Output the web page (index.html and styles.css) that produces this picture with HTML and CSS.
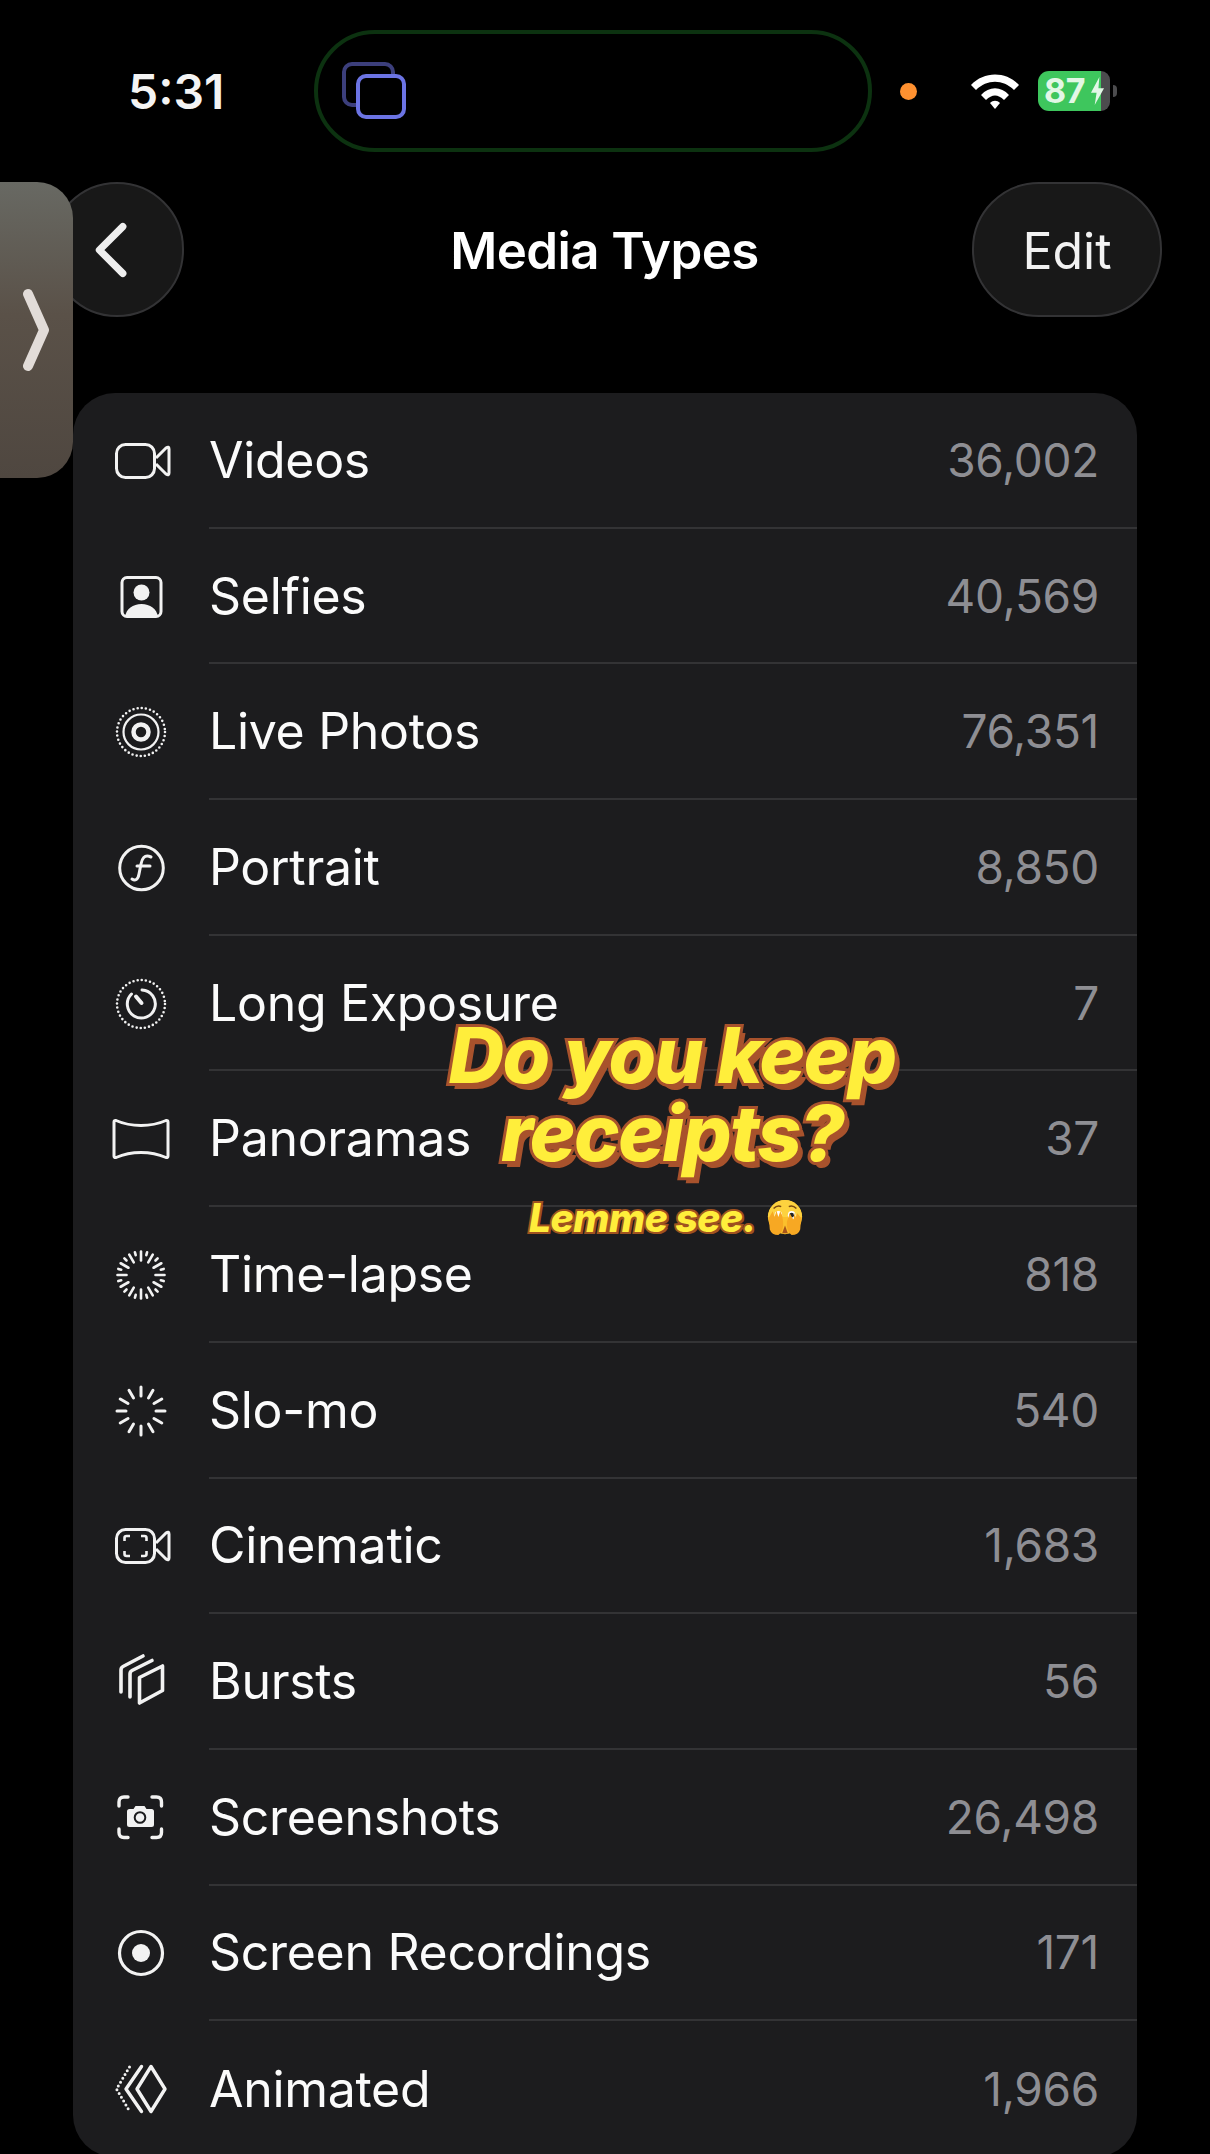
FILE: index.html
```html
<!DOCTYPE html>
<html lang="en">
<head>
    <meta charset="UTF-8">
    <title>Media Types</title>
    <link rel="stylesheet" href="styles.css">
</head>
<body>
    <div class="phone">
        <!-- Status bar -->
        <div class="status-bar">
            <span class="time">5:31</span>
            <div class="island">
                <svg class="island-icon" viewBox="0 0 66 60" fill="none">
                    <rect x="3" y="3" width="49" height="41" rx="8" stroke="#3c3f7c" stroke-width="4"/>
                    <rect x="17" y="15" width="46" height="41" rx="8" fill="#000" stroke="#6c74e4" stroke-width="4"/>
                </svg>
            </div>
            <span class="mic-dot"></span>
            <svg class="wifi" viewBox="0 0 50 38">
                <path d="M1 13 C14 -1 36 -1 49 13 L44 18 C33 7 17 7 6 18 Z" fill="#fff"/>
                <path d="M11 23 C19 14 31 14 39 23 L34 28 C28 22 22 22 16 28 Z" fill="#fff"/>
                <path d="M20 31 C23 28 27 28 30 31 L25 37 Z" fill="#fff"/>
            </svg>
            <div class="battery">
                <div class="battery-level">87</div>
                <div class="battery-rest"></div>
                <div class="battery-nub"></div>
                <svg class="bolt" viewBox="0 0 16 30"><path d="M10 0 L1 17 H7 L5 30 L15 12 H9 Z" fill="#e2f7e6"/></svg>
            </div>
        </div>

        <!-- Nav bar -->
        <div class="nav-bar">
            <div class="round-btn back-btn">
                <svg viewBox="0 0 40 64" class="back-icon" fill="none"><path d="M32 6 L6 32 L32 58" stroke="#eee" stroke-width="8" stroke-linecap="round" stroke-linejoin="round"/></svg>
            </div>
            <h1 class="nav-title">Media Types</h1>
            <div class="round-btn edit-btn">Edit</div>
        </div>

        <!-- List -->
        <div class="list">
            <div class="row">
                <svg class="row-icon" viewBox="0 0 60 60" fill="none" stroke="#f2f2f2" stroke-width="3">
                    <rect x="5.5" y="13.5" width="38" height="33" rx="9"/>
                    <path d="M45 27 L55 17 Q58 15 58 18 V42 Q58 45 55 43 L45 33" stroke-linejoin="round"/>
                </svg>
                <div class="row-body"><span class="row-name">Videos</span><span class="row-count">36,002</span></div>
            </div>
            <div class="row">
                <svg class="row-icon" viewBox="0 0 60 60" fill="none" stroke="#f2f2f2" stroke-width="3">
                    <rect x="11" y="10.5" width="39" height="39" rx="5"/>
                    <circle cx="30.5" cy="25.5" r="8" fill="#f2f2f2" stroke="none"/>
                    <path d="M14 50 C15 42 22 37 30.5 37 C39 37 46 42 47 50 Z" fill="#f2f2f2" stroke="none"/>
                </svg>
                <div class="row-body"><span class="row-name">Selfies</span><span class="row-count">40,569</span></div>
            </div>
            <div class="row">
                <svg class="row-icon" viewBox="0 0 60 60" fill="none" stroke="#f2f2f2">
                    <circle cx="30" cy="30" r="24" stroke-width="2.6" stroke-dasharray="0 4.19" stroke-linecap="round"/>
                    <circle cx="30" cy="30" r="17.5" stroke-width="2.2"/>
                    <circle cx="30" cy="30" r="7.5" stroke-width="4.5"/>
                </svg>
                <div class="row-body"><span class="row-name">Live Photos</span><span class="row-count">76,351</span></div>
            </div>
            <div class="row">
                <svg class="row-icon" viewBox="0 0 60 60" fill="none" stroke="#f2f2f2" stroke-width="3">
                    <circle cx="30.5" cy="30" r="21.8"/>
                    <path d="M40 19 C33 16 31 21 30 26 L28 36 C27 42 24 43 21 41" stroke-linecap="round"/>
                    <path d="M26 28 H39" stroke-linecap="round"/>
                </svg>
                <div class="row-body"><span class="row-name">Portrait</span><span class="row-count">8,850</span></div>
            </div>
            <div class="row">
                <svg class="row-icon" viewBox="0 0 60 60" fill="none" stroke="#f2f2f2">
                    <circle cx="30" cy="30" r="24" stroke-width="2.6" stroke-dasharray="0 4.19" stroke-linecap="round"/>
                    <path d="M31 16 A14 14 0 1 1 20.5 20" stroke-width="3" stroke-linecap="round"/>
                    <path d="M25 22.5 L30.5 29" stroke-width="4" stroke-linecap="round"/>
                </svg>
                <div class="row-body"><span class="row-name">Long Exposure</span><span class="row-count">7</span></div>
            </div>
            <div class="row">
                <svg class="row-icon" viewBox="0 0 60 60" fill="none" stroke="#f2f2f2" stroke-width="3">
                    <path d="M5 11.5 C13 15 21 16.5 30 16.5 C39 16.5 47 15 55 11.5 Q57 11 57 13 V47 Q57 49 55 48.5 C47 45 39 43.5 30 43.5 C21 43.5 13 45 5 48.5 Q3 49 3 47 V13 Q3 11 5 11.5 Z" stroke-linejoin="round"/>
                </svg>
                <div class="row-body"><span class="row-name">Panoramas</span><span class="row-count">37</span></div>
            </div>
            <div class="row">
                <svg class="row-icon" viewBox="0 0 60 60" fill="none" stroke="#f2f2f2" stroke-width="2.6" stroke-linecap="round">
                    <defs>
                        <g id="lapse">
                            <path d="M30 6.5 V15.5"/>
                            <path d="M30 6.5 V15.5" transform="rotate(30 30 30)"/>
                            <path d="M30 6.5 V15.5" transform="rotate(60 30 30)"/>
                            <path d="M30 6.5 V9.5" transform="rotate(15 30 30)"/>
                            <path d="M30 6.5 V9.5" transform="rotate(45 30 30)"/>
                            <path d="M30 6.5 V9.5" transform="rotate(75 30 30)"/>
                        </g>
                    </defs>
                    <use href="#lapse"/>
                    <use href="#lapse" transform="rotate(90 30 30)"/>
                    <use href="#lapse" transform="rotate(180 30 30)"/>
                    <use href="#lapse" transform="rotate(270 30 30)"/>
                </svg>
                <div class="row-body"><span class="row-name">Time-lapse</span><span class="row-count">818</span></div>
            </div>
            <div class="row">
                <svg class="row-icon" viewBox="0 0 60 60" fill="none" stroke="#f2f2f2" stroke-width="3" stroke-linecap="round">
                    <defs>
                        <g id="slomo">
                            <path d="M30 6 V15"/>
                            <path d="M30 6 V15" transform="rotate(30 30 30)"/>
                            <path d="M30 6 V15" transform="rotate(60 30 30)"/>
                        </g>
                    </defs>
                    <use href="#slomo"/>
                    <use href="#slomo" transform="rotate(90 30 30)"/>
                    <use href="#slomo" transform="rotate(180 30 30)"/>
                    <use href="#slomo" transform="rotate(270 30 30)"/>
                </svg>
                <div class="row-body"><span class="row-name">Slo-mo</span><span class="row-count">540</span></div>
            </div>
            <div class="row">
                <svg class="row-icon" viewBox="0 0 60 60" fill="none" stroke="#f2f2f2" stroke-width="3">
                    <rect x="5.5" y="13.5" width="38" height="33" rx="9"/>
                    <path d="M45 27 L55 17 Q58 15 58 18 V42 Q58 45 55 43 L45 33" stroke-linejoin="round"/>
                    <path d="M13.5 25 V22 Q13.5 20 15.5 20 H19 M30 20 H33.5 Q35.5 20 35.5 22 V25 M35.5 35 V38 Q35.5 40 33.5 40 H30 M19 40 H15.5 Q13.5 40 13.5 38 V35" stroke-width="2.6"/>
                </svg>
                <div class="row-body"><span class="row-name">Cinematic</span><span class="row-count">1,683</span></div>
            </div>
            <div class="row">
                <svg class="row-icon" viewBox="0 0 60 60" fill="none" stroke="#f2f2f2" stroke-width="3.6" stroke-linecap="round" stroke-linejoin="round">
                    <path d="M10 40 V18 Q10 15.5 12 14.5 L32 4"/>
                    <path d="M19 45 V22 Q19 19.5 21 18.5 L41 8.5"/>
                    <path d="M28.5 25.5 L51.5 14 V38.5 L28.5 51 Z"/>
                </svg>
                <div class="row-body"><span class="row-name">Bursts</span><span class="row-count">56</span></div>
            </div>
            <div class="row">
                <svg class="row-icon" viewBox="0 0 60 60" fill="none" stroke="#f2f2f2" stroke-width="3.4" stroke-linecap="round">
                    <path d="M8 18 V14 Q8 9 13 9 H17 M41 9 H45.5 Q50.5 9 50.5 14 V18 M50.5 41 V44.5 Q50.5 49.5 45.5 49.5 H41 M17 49.5 H13 Q8 49.5 8 44.5 V41"/>
                    <path d="M18.5 21 H22.5 L24.5 18 H33.5 L35.5 21 H40.5 Q43 21 43 23.5 V36.5 Q43 39 40.5 39 H18.5 Q16 39 16 36.5 V23.5 Q16 21 18.5 21 Z" fill="#f2f2f2" stroke="none"/>
                    <circle cx="29" cy="29.5" r="5.3" stroke="#1c1c1e" stroke-width="2"/>
                </svg>
                <div class="row-body"><span class="row-name">Screenshots</span><span class="row-count">26,498</span></div>
            </div>
            <div class="row">
                <svg class="row-icon" viewBox="0 0 60 60" fill="none" stroke="#f2f2f2" stroke-width="3.2">
                    <circle cx="30" cy="30" r="21.5"/>
                    <circle cx="30" cy="30" r="9" fill="#f2f2f2" stroke="none"/>
                </svg>
                <div class="row-body"><span class="row-name">Screen Recordings</span><span class="row-count">171</span></div>
            </div>
            <div class="row">
                <svg class="row-icon" viewBox="0 0 60 60" fill="none" stroke="#f2f2f2" stroke-width="3.4" stroke-linecap="round" stroke-linejoin="round">
                    <path d="M40 7.5 L54 30 L40 52.5 L26 30 Z"/>
                    <path d="M30.5 7.5 L15 30 L30.5 52.5"/>
                    <path d="M18.5 8 L5.5 30 L18.5 52" stroke-width="3" stroke-dasharray="0 4.4"/>
                </svg>
                <div class="row-body"><span class="row-name">Animated</span><span class="row-count">1,966</span></div>
            </div>
        </div>

        <!-- Slide-over handle -->
        <div class="side-tab">
            <svg class="side-chevron" viewBox="0 0 28 84" fill="none"><path d="M6 6 L22 42 L6 78" stroke="#e2dcd8" stroke-width="10" stroke-linecap="round" stroke-linejoin="round"/></svg>
        </div>

        <!-- Video caption -->
        <div class="caption">
            <div class="caption-main">Do you keep<br>receipts?</div>
            <div class="caption-sub">Lemme see.
                <svg class="emoji" viewBox="0 0 40 40">
                    <circle cx="20" cy="19" r="18" fill="#fbc02d"/>
                    <path d="M2 19 A18 18 0 0 1 38 19 Z" fill="#fdd23f"/>
                    <path d="M8 10 Q12 6 16 8 M24 8 Q28 6 32 10" stroke="#7a4a12" stroke-width="1.6" fill="none"/>
                    <ellipse cx="13" cy="17" rx="4" ry="4.5" fill="#fff"/>
                    <ellipse cx="27" cy="17" rx="4" ry="4.5" fill="#fff"/>
                    <circle cx="27" cy="17" r="2.4" fill="#222"/>
                    <path d="M3 20 L7 13 L9 19 L11 12 L13 19 L15 13 L17 17 L18 24 Q19 34 13 38 Q6 38 4 32 Z" fill="#f7a823"/>
                    <path d="M37 20 L33 15 L31 20 L30 14 L29 22 L25 15 L22 24 Q21 34 27 38 Q34 38 36 32 Z" fill="#f7a823"/>
                    <path d="M17 36 L20 28 L23 36 Z" fill="#a8551a"/>
                </svg>
            </div>
        </div>
    </div>
</body>
</html>
```

FILE: styles.css
```css
* {
    box-sizing: border-box;
}
html, body {
    margin: 0;
    padding: 0;
    background: #000;
}
body {
    font-family: Inter, "Liberation Sans", sans-serif;
    color: #fff;
}
.phone {
    position: relative;
    width: 1210px;
    height: 2154px;
    overflow: hidden;
    background: #000;
}

/* status bar */
.status-bar {
    display: flex;
    align-items: center;
    height: 182px;
    padding: 0 0 0 128px;
}
.time {
    flex: none;
    width: 186px;
    font-size: 48px;
    font-weight: 600;
    color: #f4f4f4;
}
.island {
    display: flex;
    align-items: center;
    width: 558px;
    height: 122px;
    padding-left: 23px;
    border: 4px solid #0c3210;
    border-radius: 61px;
}
.island-icon {
    width: 66px;
    height: 60px;
}
.mic-dot {
    width: 17px;
    height: 17px;
    margin-left: 28px;
    border-radius: 50%;
    background: #ff9130;
}
.wifi {
    width: 50px;
    height: 38px;
    margin-left: 53px;
}
.battery {
    position: relative;
    display: flex;
    align-items: center;
    height: 40px;
    margin-left: 18px;
}
.battery-level {
    width: 63px;
    height: 40px;
    padding-left: 6px;
    border-radius: 11px 0 0 11px;
    background: #3ec65d;
    color: #e2f7e6;
    font-size: 34px;
    font-weight: 700;
    line-height: 40px;
    letter-spacing: -0.5px;
}
.bolt {
    position: absolute;
    left: 52px;
    top: 6px;
    width: 15px;
    height: 28px;
}
.battery-rest {
    width: 9px;
    height: 40px;
    border-radius: 0 9px 9px 0;
    background: #4c4c4e;
}
.battery-nub {
    width: 4px;
    height: 12px;
    margin-left: 3px;
    border-radius: 0 4px 4px 0;
    background: #4c4c4e;
}

/* nav bar */
.nav-bar {
    display: flex;
    align-items: center;
    justify-content: space-between;
    height: 135px;
    padding: 0 48px 0 50px;
}
.round-btn {
    display: flex;
    align-items: center;
    justify-content: center;
    height: 135px;
    border: 2px solid #333335;
    border-radius: 67px;
    background: #181818;
}
.back-btn {
    width: 134px;
}
.back-icon {
    width: 36px;
    height: 58px;
    margin-left: -11px;
}
.nav-title {
    margin: 2px 0 0 53px;
    font-size: 51px;
    font-weight: 600;
    letter-spacing: -0.6px;
    color: #fff;
}
.edit-btn {
    width: 190px;
    padding-top: 2px;
    font-size: 50px;
    color: #f2f2f2;
}

/* list */
.list {
    margin: 76px 73px 0 73px;
    border-radius: 42px;
    background: #1c1c1e;
    overflow: hidden;
}
.row {
    display: flex;
    align-items: center;
    height: 135.7px;
    padding-left: 38px;
}
.row-icon {
    flex: none;
    width: 60px;
    height: 60px;
    overflow: visible;
}
.row-body {
    flex: 1;
    display: flex;
    align-items: center;
    justify-content: space-between;
    align-self: stretch;
    margin-left: 38px;
    padding-right: 38px;
    border-bottom: 2px solid #333335;
}
.row:last-child .row-body {
    border-bottom: none;
}
.row-name {
    font-size: 50px;
    color: #fbfbfb;
    letter-spacing: -0.3px;
}
.row-count {
    font-size: 46px;
    color: #8e8e93;
    letter-spacing: -0.3px;
}

/* overlays */
.side-tab {
    position: absolute;
    left: 0;
    top: 182px;
    display: flex;
    align-items: center;
    width: 73px;
    height: 296px;
    padding-left: 22px;
    border-radius: 0 36px 36px 0;
    background: linear-gradient(#686963, #5a5148 45%, #4f4740);
}
.side-chevron {
    width: 28px;
    height: 84px;
}
.caption {
    position: absolute;
    left: 347px;
    top: 1016px;
    width: 650px;
    text-align: center;
    font-weight: 800;
    font-style: italic;
    color: #ffee3b;
    paint-order: stroke fill;
}
.caption-main {
    font-size: 77px;
    line-height: 78px;
    letter-spacing: -1.6px;
    -webkit-text-stroke: 6px #a8522c;
    text-shadow: 5px 6px 0 #a8522c;
}
.caption-sub {
    display: flex;
    align-items: center;
    justify-content: center;
    gap: 10px;
    margin: 22px 0 0 -11px;
    font-size: 39px;
    letter-spacing: -0.5px;
    -webkit-text-stroke: 4px #a0521f;
    text-shadow: 2px 2px 0 #a0521f;
}
.emoji {
    width: 38px;
    height: 38px;
}
```
